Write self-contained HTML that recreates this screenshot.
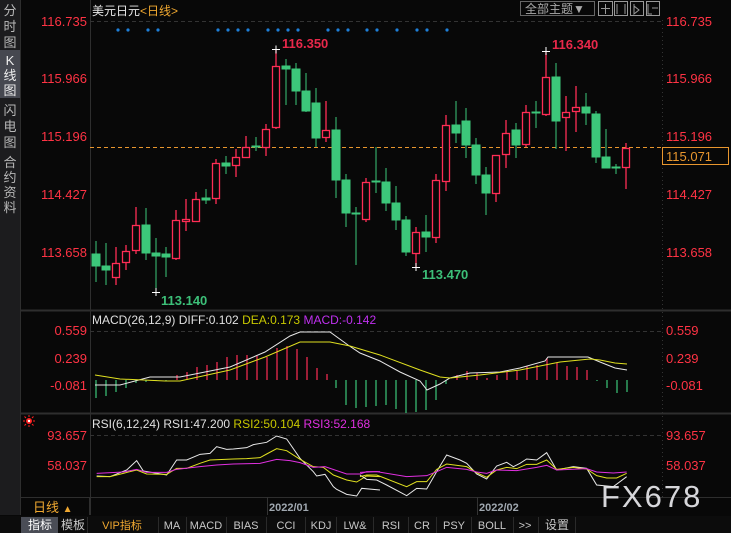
<!DOCTYPE html>
<html><head><meta charset="utf-8"><style>
html,body{margin:0;padding:0;background:#080808;width:731px;height:533px;overflow:hidden}
svg{display:block}
text{font-family:"Liberation Sans","Noto Sans CJK SC",sans-serif}
.cj{font-family:"Liberation Sans","Noto Sans CJK SC",sans-serif}
.tb{font-family:"Liberation Mono","Noto Sans CJK SC",monospace;font-size:11px;fill:#c8c8c8}
</style></head><body>
<svg width="731" height="533" viewBox="0 0 731 533" xmlns="http://www.w3.org/2000/svg">
<rect width="731" height="533" fill="#080808"/>
<!-- sidebar -->
<rect x="0" y="0" width="20" height="515" fill="#1c1c1e"/>
<rect x="0" y="50" width="20" height="48" fill="#464850"/>
<g class="cj" font-size="13" fill="#b8b8b8" text-anchor="middle">
<text x="10" y="15">分</text><text x="10" y="31">时</text><text x="10" y="47">图</text>
<text x="10" y="65" fill="#eee">K</text><text x="10" y="80" fill="#eee">线</text><text x="10" y="95" fill="#eee">图</text>
<text x="10" y="115">闪</text><text x="10" y="131">电</text><text x="10" y="147">图</text>
<text x="10" y="167">合</text><text x="10" y="182">约</text><text x="10" y="197">资</text><text x="10" y="212">料</text>
</g>
<!-- grid lines -->
<line x1="20.5" y1="0" x2="20.5" y2="515" stroke="#2e2e2e"/>
<line x1="90.5" y1="0" x2="90.5" y2="515" stroke="#2e2e2e"/>
<line x1="662.5" y1="20" x2="662.5" y2="497" stroke="#333" stroke-dasharray="1,3"/>
<line x1="20" y1="310.5" x2="731" y2="310.5" stroke="#2e2e2e" stroke-width="2"/>
<line x1="20" y1="413.5" x2="731" y2="413.5" stroke="#2e2e2e" stroke-width="2"/>
<line x1="20" y1="497.5" x2="731" y2="497.5" stroke="#2e2e2e"/>
<line x1="90" y1="21.5" x2="662" y2="21.5" stroke="#333" stroke-dasharray="4,3"/>
<line x1="90" y1="331.5" x2="662" y2="331.5" stroke="#333" stroke-dasharray="4,3"/>
<line x1="90" y1="435.5" x2="662" y2="435.5" stroke="#333" stroke-dasharray="4,3"/>
<line x1="90" y1="147.5" x2="662" y2="147.5" stroke="#e8962e" stroke-dasharray="4,3"/>
<!-- header -->
<text x="92" y="15" class="cj" font-size="12" fill="#e8e8e8">美元日元<tspan fill="#f0a830">&lt;日线&gt;</tspan></text>
<rect x="520.5" y="1.5" width="74" height="14" fill="none" stroke="#666"/>
<text x="525" y="13" class="cj" font-size="12" fill="#aaa">全部主题▼</text>
<g fill="none" stroke="#999"><rect x="598.5" y="1.5" width="14" height="14"/><rect x="614.5" y="1.5" width="13" height="14"/><rect x="630.5" y="1.5" width="13" height="14"/><rect x="646.5" y="1.5" width="13" height="14"/>
<path d="M605.5 4v10M601 8.5h9M617 4v10M625 4v10M634 4v10l5-4-5-4M648 4v10h4M652 8h6"/></g>
<!-- price labels -->
<g font-size="13" fill="#ff3344">
<g text-anchor="end"><text x="87" y="26">116.735</text><text x="87" y="83">115.966</text><text x="87" y="141">115.196</text><text x="87" y="199">114.427</text><text x="87" y="257">113.658</text>
<text x="87" y="335">0.559</text><text x="87" y="363">0.239</text><text x="87" y="390">-0.081</text>
<text x="87" y="440">93.657</text><text x="87" y="470">58.037</text></g>
<text x="666" y="26">116.735</text><text x="666" y="83">115.966</text><text x="666" y="141">115.196</text><text x="666" y="199">114.427</text><text x="666" y="257">113.658</text>
<text x="666" y="335">0.559</text><text x="666" y="363">0.239</text><text x="666" y="390">-0.081</text>
<text x="666" y="440">93.657</text><text x="666" y="470">58.037</text>
</g>
<rect x="662.5" y="147.5" width="66" height="17" fill="#080808" stroke="#e8962e"/>
<text x="666" y="161" font-size="13" fill="#e8962e">115.071</text>
<!-- blue dots -->
<g fill="#1e7fd8">
<circle cx="118" cy="30" r="1.6"/><circle cx="128" cy="30" r="1.6"/><circle cx="148" cy="30" r="1.6"/><circle cx="158" cy="30" r="1.6"/>
<circle cx="218" cy="30" r="1.6"/><circle cx="228" cy="30" r="1.6"/><circle cx="238" cy="30" r="1.6"/><circle cx="248" cy="30" r="1.6"/>
<circle cx="268" cy="30" r="1.6"/><circle cx="278" cy="30" r="1.6"/><circle cx="288" cy="30" r="1.6"/><circle cx="298" cy="30" r="1.6"/>
<circle cx="328" cy="30" r="1.6"/><circle cx="338" cy="30" r="1.6"/><circle cx="348" cy="30" r="1.6"/><circle cx="367" cy="30" r="1.6"/><circle cx="377" cy="30" r="1.6"/><circle cx="397" cy="30" r="1.6"/><circle cx="417" cy="30" r="1.6"/><circle cx="427" cy="30" r="1.6"/><circle cx="447" cy="30" r="1.6"/>
</g>
<!-- candles -->
<g id="c" stroke-width="1.5"></g>
<g>
<!-- G: green filled; R: red hollow -->
<g stroke="#3cc77a" fill="#3cc77a">
<line x1="96" y1="241" x2="96" y2="282"/><rect x="92" y="254" width="8" height="12"/>
<line x1="106" y1="243" x2="106" y2="285"/><rect x="102" y="266" width="8" height="4"/>
<line x1="146" y1="208" x2="146" y2="260"/><rect x="142" y="225" width="8" height="28"/>
<line x1="156" y1="238" x2="156" y2="292"/><rect x="152" y="253" width="8" height="3"/>
<line x1="166" y1="247" x2="166" y2="277"/><rect x="162" y="254" width="8" height="3"/>
<line x1="206" y1="189" x2="206" y2="204"/><rect x="202" y="198" width="8" height="2"/>
<line x1="226" y1="156" x2="226" y2="174"/><rect x="222" y="163" width="8" height="3"/>
<line x1="256" y1="137" x2="256" y2="151"/><rect x="252" y="146" width="8" height="1"/>
<line x1="286" y1="59" x2="286" y2="105"/><rect x="282" y="66" width="8" height="3"/>
<line x1="296" y1="63" x2="296" y2="105"/><rect x="292" y="69" width="8" height="22"/>
<line x1="306" y1="73" x2="306" y2="112"/><rect x="302" y="91" width="8" height="20"/>
<line x1="316" y1="88" x2="316" y2="147"/><rect x="312" y="103" width="8" height="35"/>
<line x1="336" y1="117" x2="336" y2="198"/><rect x="332" y="130" width="8" height="50"/>
<line x1="346" y1="174" x2="346" y2="227"/><rect x="342" y="180" width="8" height="33"/>
<line x1="356" y1="207" x2="356" y2="265"/><rect x="352" y="213" width="8" height="1"/>
<line x1="376" y1="147" x2="376" y2="193"/><rect x="372" y="181" width="8" height="1"/>
<line x1="386" y1="168" x2="386" y2="211"/><rect x="382" y="182" width="8" height="21"/>
<line x1="396" y1="186" x2="396" y2="230"/><rect x="392" y="203" width="8" height="17"/>
<line x1="406" y1="216" x2="406" y2="256"/><rect x="402" y="220" width="8" height="32"/>
<line x1="426" y1="215" x2="426" y2="252"/><rect x="422" y="232" width="8" height="5"/>
<line x1="456" y1="101" x2="456" y2="143"/><rect x="452" y="125" width="8" height="8"/>
<line x1="466" y1="108" x2="466" y2="158"/><rect x="462" y="121" width="8" height="24"/>
<line x1="476" y1="138" x2="476" y2="184"/><rect x="472" y="145" width="8" height="30"/>
<line x1="486" y1="167" x2="486" y2="215"/><rect x="482" y="175" width="8" height="18"/>
<line x1="516" y1="123" x2="516" y2="158"/><rect x="512" y="130" width="8" height="15"/>
<line x1="536" y1="101" x2="536" y2="128"/><rect x="532" y="112" width="8" height="1"/>
<line x1="556" y1="63" x2="556" y2="149"/><rect x="552" y="77" width="8" height="44"/>
<line x1="586" y1="93" x2="586" y2="125"/><rect x="582" y="107" width="8" height="6"/>
<line x1="596" y1="111" x2="596" y2="163"/><rect x="592" y="114" width="8" height="43"/>
<line x1="606" y1="129" x2="606" y2="168"/><rect x="602" y="157" width="8" height="11"/>
<line x1="616" y1="164" x2="616" y2="174"/><rect x="612" y="167" width="8" height="1"/>
</g>
<g stroke="#ff2d55" fill="#080808" stroke-width="1.3">
<line x1="116" y1="247" x2="116" y2="285"/><rect x="112.5" y="263.5" width="7" height="14"/>
<line x1="126" y1="245" x2="126" y2="270"/><rect x="122.5" y="251.5" width="7" height="11"/>
<line x1="136" y1="207" x2="136" y2="254"/><rect x="132.5" y="225.5" width="7" height="25"/>
<line x1="176" y1="210" x2="176" y2="260"/><rect x="172.5" y="220.5" width="7" height="38"/>
<line x1="186" y1="199" x2="186" y2="231"/><rect x="182.5" y="219.5" width="7" height="2"/>
<line x1="196" y1="192" x2="196" y2="221"/><rect x="192.5" y="199.5" width="7" height="22"/>
<line x1="216" y1="159" x2="216" y2="204"/><rect x="212.5" y="163.5" width="7" height="35"/>
<line x1="236" y1="149" x2="236" y2="177"/><rect x="232.5" y="157.5" width="7" height="8"/>
<line x1="246" y1="136" x2="246" y2="157"/><rect x="242.5" y="147.5" width="7" height="10"/>
<line x1="266" y1="124" x2="266" y2="156"/><rect x="262.5" y="129.5" width="7" height="18"/>
<line x1="276" y1="49" x2="276" y2="129"/><rect x="272.5" y="66.5" width="7" height="61"/>
<line x1="326" y1="101" x2="326" y2="142"/><rect x="322.5" y="130.5" width="7" height="7"/>
<line x1="366" y1="178" x2="366" y2="222"/><rect x="362.5" y="182.5" width="7" height="37"/>
<line x1="416" y1="227" x2="416" y2="267"/><rect x="412.5" y="232.5" width="7" height="21"/>
<line x1="436" y1="174" x2="436" y2="243"/><rect x="432.5" y="180.5" width="7" height="57"/>
<line x1="446" y1="115" x2="446" y2="191"/><rect x="442.5" y="125.5" width="7" height="56"/>
<line x1="496" y1="155" x2="496" y2="202"/><rect x="492.5" y="155.5" width="7" height="38"/>
<line x1="506" y1="120" x2="506" y2="168"/><rect x="502.5" y="133.5" width="7" height="21"/>
<line x1="526" y1="105" x2="526" y2="147"/><rect x="522.5" y="112.5" width="7" height="32"/>
<line x1="546" y1="51" x2="546" y2="116"/><rect x="542.5" y="77.5" width="7" height="37"/>
<line x1="566" y1="96" x2="566" y2="151"/><rect x="562.5" y="112.5" width="7" height="5"/>
<line x1="576" y1="86" x2="576" y2="132"/><rect x="572.5" y="107.5" width="7" height="4"/>
<line x1="626" y1="143" x2="626" y2="189"/><rect x="622.5" y="148.5" width="7" height="19"/>
</g>
</g>
<!-- annotations -->
<g stroke="#fff" stroke-width="1"><path d="M272 49.5h8M276 45.5v8M152 292.5h8M156 288v8M412 267.5h8M416 263v8M542 51.5h8M546 47v8"/></g>
<g font-size="13" font-weight="bold"><text x="282" y="48" fill="#e8284a">116.350</text><text x="552" y="49" fill="#e8284a">116.340</text>
<text x="161" y="305" fill="#3cbf78">113.140</text><text x="422" y="279" fill="#3cbf78">113.470</text></g>
<!-- MACD panel -->
<text x="92" y="324" font-size="12" fill="#e0e0e0">MACD(26,12,9) DIFF:0.102 <tspan fill="#c8c800">DEA:0.173</tspan> <tspan fill="#c030f0">MACD:-0.142</tspan></text>
<g stroke="#3cc77a" stroke-width="1.2">
<path d="M96 380V398M106 380V396M116 380V392M126 380V388M136 380V383M146 380V382M156 380V381M166 380V381"/>
<path d="M336 380V388M346 380V405M356 380V408M366 380V407M376 380V406M386 380V405M396 380V409M406 380V413M416 380V412M426 380V410M436 380V400M446 380V384"/>
<path d="M597 380V381M607 380V388M617 380V393M627 380V392"/>
</g>
<g stroke="#ff2d55" stroke-width="1.2">
<path d="M177 380V375M187 380V372M197 380V367M207 380V365M217 380V362M227 380V357M237 380V355M247 380V355M257 380V356M267 380V357M277 380V348M287 380V346M297 380V349M307 380V357M317 380V368M327 380V374"/>
<path d="M457 380V375M467 380V371M477 380V373M487 380V378M497 380V375M507 380V371M517 380V371M527 380V366M537 380V365M547 380V358M557 380V363M567 380V366M577 380V367M587 380V370"/>
</g>
<polyline fill="none" stroke="#e8e8e8" points="95,385 120,385 135,381 150,377 180,377 230,367 265,352 290,336 300,332 330,332 348,345 360,353 380,361 400,372 420,381 427,390 440,384 450,378 470,373 500,372 520,368 545,361 548,357 588,357 600,362 615,368 627,370"/>
<polyline fill="none" stroke="#e0e020" points="95,375 120,379 165,381 180,381 230,370 265,357 300,342 330,342 350,346 380,355 420,370 440,377 450,378 480,375 520,370 560,362 590,359 600,360 615,363 627,364"/>
<!-- RSI panel -->
<g transform="translate(29,421)"><circle r="3" fill="#ff2020"/><circle r="1.2" fill="#fff"/><path d="M0 -6v2M0 4v2M-6 0h2M4 0h2M-4.5 -4.5l1.5 1.5M3 3l1.5 1.5M-4.5 4.5l1.5-1.5M3 -3l1.5-1.5" stroke="#ff2020"/></g>
<text x="92" y="428" font-size="12" fill="#e0e0e0">RSI(6,12,24) RSI1:47.200 <tspan fill="#c8c800">RSI2:50.104</tspan> <tspan fill="#e030e0">RSI3:52.168</tspan></text>
<g fill="none" stroke-width="3">
<g transform="translate(0,410) scale(0.33333)">
<polyline stroke="#e8e8e8" points="290,198 330,200 380,180 410,152 430,183 500,195 530,150 560,150 600,133 630,130 650,110 680,118 700,117 740,113 760,104 800,97 830,78 860,87 900,145 940,185 950,198 975,193 1000,230 1010,238 1040,253 1070,258 1085,235 1140,240"/>
<polyline stroke="#e0e020" points="290,200 330,200 370,190 410,180 440,192 500,193 530,175 560,175 600,160 630,150 700,147 740,146 780,143 800,132 830,116 860,122 900,148 940,170 970,172 1000,195 1040,210 1070,216 1100,198 1140,200"/>
<polyline stroke="#e030e0" points="290,190 370,186 410,178 440,187 500,187 530,178 600,170 650,165 700,162 780,160 830,148 870,152 900,158 940,172 975,170 1040,192 1080,192 1100,185 1140,185"/>
</g>
<g transform="translate(360,410) scale(0.33333)">
<polyline stroke="#e8e8e8" points="0,195 20,208 50,210 80,225 140,257 170,235 200,237 230,185 260,135 300,150 320,160 350,192 380,207 410,168 440,157 460,170 480,160 500,147 530,150 560,128 590,180 640,170 680,175 710,225 760,230 800,200"/>
<polyline stroke="#e0e020" points="0,200 20,195 50,195 140,230 170,215 200,215 230,178 260,162 320,170 350,188 380,202 410,180 440,172 470,176 500,163 530,163 560,150 590,178 640,172 680,177 710,197 740,204 770,204 800,190"/>
<polyline stroke="#e030e0" points="0,187 50,185 140,200 200,197 230,185 260,172 320,178 350,186 380,190 410,180 470,182 530,172 560,166 590,180 680,176 710,186 760,189 800,186"/>
</g>
</g>
<!-- date row -->
<line x1="89.5" y1="497" x2="89.5" y2="515" stroke="#2e2e2e"/>
<text x="33" y="512" class="cj" font-size="13" fill="#f0a830">日线 <tspan font-size="10">▲</tspan></text>
<line x1="267.5" y1="497" x2="267.5" y2="515" stroke="#333"/><line x1="477.5" y1="497" x2="477.5" y2="515" stroke="#333"/>
<text x="269" y="511" font-size="11" font-weight="bold" fill="#a0a8b0">2022/01</text>
<text x="479" y="511" font-size="11" font-weight="bold" fill="#a0a8b0">2022/02</text>
<text x="601" y="507" font-size="31" fill="#e8e8ec" letter-spacing="2" opacity="0.92">FX678</text>
<!-- tab bar -->
<rect x="0" y="516" width="731" height="17" fill="#0c0c0c"/>
<rect x="21" y="517" width="37" height="16" fill="#4a4d56"/>
<g stroke="#2a2a2a"><path d="M87.5 517v16M158.5 517v16M186.5 517v16M226.5 517v16M266.5 517v16M305.5 517v16M336.5 517v16M373.5 517v16M408.5 517v16M436.5 517v16M471.5 517v16M513.5 517v16M538.5 517v16M575.5 517v16"/></g>
<g class="tb" text-anchor="middle">
<text x="40" y="529" fill="#fff" class="cj" font-size="12">指标</text>
<text x="73" y="529" class="cj" font-size="12">模板</text>
<text x="122" y="529" fill="#f0a830">VIP指标</text>
<text x="172" y="529">MA</text><text x="206" y="529">MACD</text><text x="246" y="529">BIAS</text><text x="286" y="529">CCI</text><text x="321" y="529">KDJ</text><text x="355" y="529">LW&amp;</text><text x="391" y="529">RSI</text><text x="422" y="529">CR</text><text x="454" y="529">PSY</text><text x="492" y="529">BOLL</text><text x="525" y="529">&gt;&gt;</text><text x="557" y="529" class="cj" font-size="12">设置</text>
</g>
</svg>
</body></html>
